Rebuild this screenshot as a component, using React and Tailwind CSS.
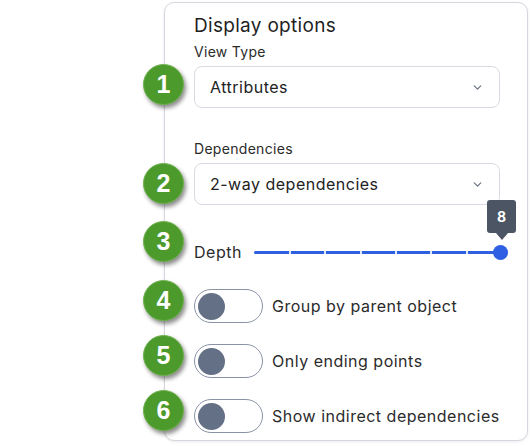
import { ChevronDown } from "lucide-react";

function Badge({ n, className }) {
  return (
    <div
      className={`absolute -left-[51px] size-[41px] rounded-full bg-[#4d9a2c] border border-[#6fb24f] shadow-[2px_3px_4px_rgba(0,0,0,0.45)] flex items-center justify-center text-white text-[25px] font-bold font-['Liberation_Sans',Arial,sans-serif] ${className}`}
    >
      {n}
    </div>
  );
}

function Select({ value, n, badgeClass }) {
  return (
    <div className="relative">
      <Badge n={n} className={badgeClass} />
      <div className="h-[42px] rounded-[8px] border border-[#dadae2] flex items-center justify-between pl-[15px] pr-[15px] text-[16px] text-[#222] tracking-[0.5px]">
        <span>{value}</span>
        <ChevronDown className="size-[13px] text-[#6b7280]" strokeWidth={2.2} />
      </div>
    </div>
  );
}

function Toggle({ n, label }) {
  return (
    <div className="relative flex items-center gap-[9px]">
      <Badge n={n} className="-top-[9px]" />
      <div className="w-[69px] h-[34px] rounded-full border border-[#8a93a6] flex items-center pl-[3px]">
        <div className="size-[27px] rounded-full bg-[#647085]" />
      </div>
      <span className="text-[16px] text-[#2b2b2b] tracking-[0.5px]">{label}</span>
    </div>
  );
}

function Slider() {
  const ticks = [1, 2, 3, 4, 5, 6];
  return (
    <div className="relative flex-1 h-[24px] flex items-center ml-[12px] mr-[-1px]">
      <div className="relative w-full h-[3px] bg-[#2f5fe3] rounded-full">
        {ticks.map((t) => (
          <div
            key={t}
            className="absolute top-0 w-[2px] h-[3px] bg-[#dfe6fb]"
            style={{ left: `${(t / 7) * 100}%` }}
          />
        ))}
      </div>
      <div className="absolute -right-[7px] size-[15px] rounded-full bg-[#2f5fe3]" />
      <div className="absolute -right-[15px] -top-[40px] flex flex-col items-center">
        <div className="w-[29px] h-[33px] rounded-[3px] bg-[#4b5563] flex items-center justify-center text-white text-[14px] font-bold">
          8
        </div>
        <div className="w-0 h-0 border-l-[6px] border-r-[6px] border-t-[7px] border-l-transparent border-r-transparent border-t-[#4b5563]" />
      </div>
    </div>
  );
}

export default function App() {
  return (
    <div className="w-[530px] h-[446px] bg-white overflow-hidden font-['Inter',sans-serif]">
      <div className="ml-[164px] mt-[2px] w-[364px] h-[439px] border border-[#d6d6de] rounded-[10px] bg-white shadow-[0_1px_3px_rgba(0,0,0,0.08)] pl-[29px] pr-[27px] pt-[11px]">
        <h2 className="text-[19px] leading-[24px] text-[#1f1f1f] font-normal tracking-[0.3px]">Display options</h2>
        <div className="mt-[4px] text-[14px] leading-[20px] text-[#2b2b2b] tracking-[0.3px]">View Type</div>
        <div className="mt-[4px]">
          <Select value="Attributes" n="1" badgeClass="-top-[2px]" />
        </div>
        <div className="mt-[31px] text-[14px] leading-[20px] text-[#2b2b2b] tracking-[0.3px]">Dependencies</div>
        <div className="mt-[4px]">
          <Select value="2-way dependencies" n="2" badgeClass="top-0" />
        </div>
        <div className="relative mt-[35px] flex items-center h-[24px]">
          <Badge n="3" className="-top-[19px]" />
          <span className="text-[16px] text-[#2b2b2b] tracking-[0.5px]">Depth</span>
          <Slider />
        </div>
        <div className="mt-[25px] flex flex-col gap-[21px]">
          <Toggle n="4" label="Group by parent object" />
          <Toggle n="5" label="Only ending points" />
          <Toggle n="6" label="Show indirect dependencies" />
        </div>
      </div>
    </div>
  );
}
